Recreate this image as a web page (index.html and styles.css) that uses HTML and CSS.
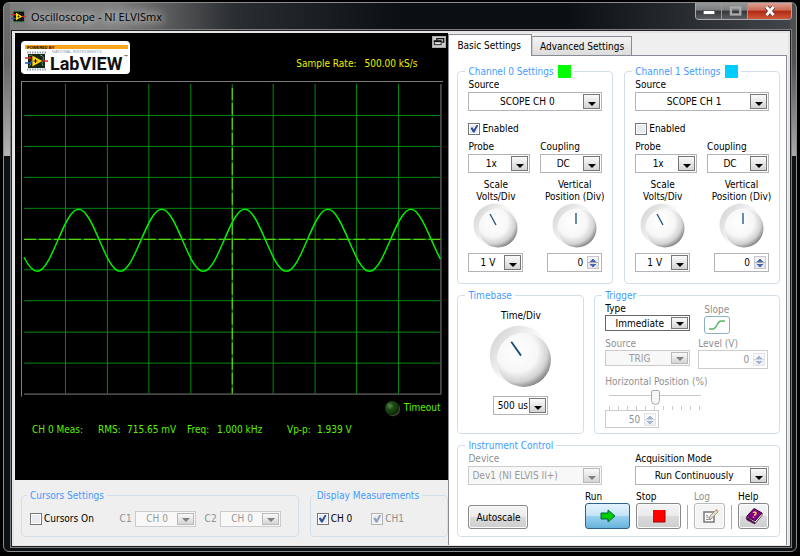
FILE: index.html
```
<!DOCTYPE html>
<html lang="en">
<head>
<meta charset="utf-8">
<title>Oscilloscope - NI ELVISmx</title>
<link rel="stylesheet" href="styles.css">
</head>
<body>
<div class="window">
	<div class="titlebar">
		<svg class="appIcon" viewBox="0 0 24 20">
			<rect x="4" y="2" width="17" height="16" fill="#111"/>
			<path d="M5 1h16M5 19h16" stroke="#3a8f4a" stroke-width="2" stroke-dasharray="1.5 1.5"/>
			<path d="M0 7h8" stroke="#e02020" stroke-width="2"/>
			<path d="M0 13h8" stroke="#2050d0" stroke-width="2"/>
			<path d="M17 10h7" stroke="#e02020" stroke-width="2"/>
			<path d="M8 4l10 6-10 6z" fill="#ffe000"/>
			<path d="M10 10h4M12 8v4" stroke="#111" stroke-width="1"/>
		</svg>
		<h1>Oscilloscope - NI ELVISmx</h1>
		<div class="windowButtons">
			<button type="button" aria-label="Minimize"><svg viewBox="0 0 12 10"><rect x="1" y="4.5" width="10" height="3.5" fill="#fff" stroke="#444" stroke-width=".7"/></svg></button>
			<button type="button" aria-label="Maximize" disabled><svg viewBox="0 0 12 10"><rect x="2.5" y="2" width="8" height="6" fill="none" stroke="#aaa" stroke-width="2"/></svg></button>
			<button type="button" aria-label="Close" class="close"><svg viewBox="0 0 12 10"><path d="M3 1.5l6 7M9 1.5l-6 7" stroke="#644" stroke-width="4"/><path d="M3 1.5l6 7M9 1.5l-6 7" stroke="#fff" stroke-width="2.4"/></svg></button>
		</div>
	</div>
	<div class="frame">
	<div class="client">
		<div class="left">
			<div class="scope">
				<div class="scopeHeader">
					<svg class="logo" viewBox="0 0 109 33">
						<rect width="109" height="33" rx="4" fill="#fff"/>
						<rect x="4" y="4" width="103" height="4" fill="#faa51a"/>
						<text x="6" y="8" class="logoTiny">POWERED BY</text>
						<rect x="7" y="13" width="17" height="14" fill="#16241a"/>
						<path d="M6 11.5h20M6 28.5h20" stroke="#9a9fb0" stroke-width="2" stroke-dasharray="1.5 1"/>
						<path d="M8 15q5-3 3 4t-3 6M19 14q5 1 3 5t0 6" stroke="#48a860" fill="none"/>
						<path d="M4 17h6" stroke="#e2231a" stroke-width="1.5"/>
						<path d="M4 22h6" stroke="#2456c8" stroke-width="1.5"/>
						<path d="M21 20h6" stroke="#e2231a" stroke-width="1.5"/>
						<path d="M11 14l11 6-11 6z" fill="#ffd814" stroke="#111" stroke-width=".7"/>
						<path d="M12.500 20h4M14.500 18v4" stroke="#111"/>
						<text x="31" y="12" class="logoMaker">NATIONAL INSTRUMENTS</text>
						<text x="29" y="29" class="logoName">LabVIEW</text>
						<text x="103" y="17" class="logoTiny">™</text>
					</svg>
					<div class="sampleRate"><span>Sample Rate:</span><span>500.00 kS/s</span></div>
					<button type="button" class="popout" aria-label="Resize graph"><svg viewBox="0 0 14 11"><path d="M4.500 4V2h8v4h-2" fill="none" stroke="#111" stroke-width="1.500"/><rect x="1.500" y="4.500" width="8" height="4.500" fill="#ddd" stroke="#111"/><path d="M1 5h9" stroke="#111" stroke-width="2"/></svg></button>
				</div>
				<svg class="graph" viewBox="21 81 423 316">
					<path class="edge" d="M21 81.500H444M21.500 81V397M24 394.500H442M441.500 84V394"/>
					<path class="grid" d="M65.500 84V394M107.500 84V394M149 84V394M191 84V394M273.500 84V394M315.500 84V394M357 84V394M399 84V394"/>
					<path class="grid" d="M24 115.500H441M24 146.500H441M24 177.500H441M24 208.500H441M24 270H441M24 301H441M24 332.500H441M24 363.500H441"/>
					<path class="axis dim" d="M232.500 84V394M24 239.500H441"/>
					<path class="axis" d="M232.500 88V394M24 239.500H441"/>
					<path class="wave" d="M24 257.500C28.400 266 32.700 271.500 37.100 271.500C52.100 271.500 63.700 209.500 78.700 209.500S105.300 271.500 120.300 271.500S146.900 209.500 161.900 209.500S188.500 271.500 203.500 271.500S230.100 209.500 245.100 209.500S271.700 271.500 286.700 271.500S313.300 209.500 328.300 209.500S354.900 271.500 369.900 271.500S396.500 209.500 411.500 209.500C421.300 209.500 431.200 241 441 259.400"/>
				</svg>
				<div class="timeout"><span class="led"></span>Timeout</div>
				<div class="measurements">
					<span>CH 0 Meas:</span>
					<span>RMS:</span><span>715.65 mV</span>
					<span>Freq:</span><span>1.000 kHz</span>
					<span>Vp-p:</span><span>1.939 V</span>
				</div>
			</div>
			<div class="footer">
				<fieldset class="cursors">
					<legend>Cursors Settings</legend>
					<div class="row">
						<label class="check"><input type="checkbox">Cursors On</label>
						<label class="off" for="c1">C1</label>
						<div class="combo"><select id="c1" disabled><option>CH 0</option></select></div>
						<label class="off" for="c2">C2</label>
						<div class="combo"><select id="c2" disabled><option>CH 0</option></select></div>
					</div>
				</fieldset>
				<fieldset class="display">
					<legend>Display Measurements</legend>
					<div class="row">
						<label class="check"><input type="checkbox" checked>CH 0</label>
						<label class="check off"><input type="checkbox" checked disabled>CH1</label>
					</div>
				</fieldset>
			</div>
		</div>
		<div class="right">
			<div class="tabs">
				<button type="button" class="active">Basic Settings</button>
				<button type="button">Advanced Settings</button>
			</div>
			<div class="panel">
				<div class="channels">
					<fieldset class="channel">
						<legend>Channel 0 Settings<span class="swatch"></span></legend>
						<label for="source0">Source</label>
						<div class="combo"><select id="source0"><option>SCOPE CH 0</option></select></div>
						<label class="check"><input type="checkbox" checked>Enabled</label>
						<div class="pair">
							<div>
								<label for="probe0">Probe</label>
								<div class="combo"><select id="probe0"><option>1x</option></select></div>
							</div>
							<div>
								<label for="coupling0">Coupling</label>
								<div class="combo"><select id="coupling0"><option>DC</option></select></div>
							</div>
						</div>
						<div class="knobs">
							<div class="knobBox">
								<label for="scale0">Scale<br>Volts/Div</label>
								<svg class="knob" viewBox="0 0 46 46"><use href="#knob"/><path d="M17 11l6 11" class="needle"/></svg>
								<div class="combo"><select id="scale0"><option>1 V</option></select></div>
							</div>
							<div class="knobBox">
								<label for="position0">Vertical<br>Position (Div)</label>
								<svg class="knob" viewBox="0 0 46 46"><use href="#knob"/><path d="M24 10v11" class="needle"/></svg>
								<div class="spin"><input type="text" id="position0" value="0"><i></i></div>
							</div>
						</div>
					</fieldset>
					<fieldset class="channel">
						<legend>Channel 1 Settings<span class="swatch blue"></span></legend>
						<label for="source1">Source</label>
						<div class="combo"><select id="source1"><option>SCOPE CH 1</option></select></div>
						<label class="check"><input type="checkbox">Enabled</label>
						<div class="pair">
							<div>
								<label for="probe1">Probe</label>
								<div class="combo"><select id="probe1"><option>1x</option></select></div>
							</div>
							<div>
								<label for="coupling1">Coupling</label>
								<div class="combo"><select id="coupling1"><option>DC</option></select></div>
							</div>
						</div>
						<div class="knobs">
							<div class="knobBox">
								<label for="scale1">Scale<br>Volts/Div</label>
								<svg class="knob" viewBox="0 0 46 46"><use href="#knob"/><path d="M17 11l6 11" class="needle"/></svg>
								<div class="combo"><select id="scale1"><option>1 V</option></select></div>
							</div>
							<div class="knobBox">
								<label for="position1">Vertical<br>Position (Div)</label>
								<svg class="knob" viewBox="0 0 46 46"><use href="#knob"/><path d="M24 10v11" class="needle"/></svg>
								<div class="spin"><input type="text" id="position1" value="0"><i></i></div>
							</div>
						</div>
					</fieldset>
				</div>
				<div class="timing">
					<fieldset class="timebase">
						<legend>Timebase</legend>
						<div class="knobBox">
							<label for="timeDiv">Time/Div</label>
							<svg class="knob big" viewBox="0 0 46 46"><use href="#knob"/><path d="M16 12l7 10" class="needle"/></svg>
							<div class="combo"><select id="timeDiv"><option>500 us</option></select></div>
						</div>
					</fieldset>
					<fieldset class="trigger">
						<legend>Trigger</legend>
						<div class="triggerGrid">
							<div>
								<label for="type">Type</label>
								<div class="combo dark"><select id="type"><option>Immediate</option></select></div>
							</div>
							<div class="slopeBox off">
								<label for="slope">Slope</label>
								<button type="button" id="slope" class="slope"><svg viewBox="0 0 24 16"><path d="M4 12h4c4 0 4-8 8-8h4" fill="none" stroke="#58b868" stroke-width="1.500"/></svg></button>
							</div>
							<div class="off">
								<label for="trigSource">Source</label>
								<div class="combo"><select id="trigSource" disabled><option>TRIG</option></select></div>
							</div>
							<div class="off">
								<label for="level">Level (V)</label>
								<div class="spin"><input type="text" id="level" value="0" disabled><i></i></div>
							</div>
						</div>
						<div class="horizontal off">
							<label for="hpos">Horizontal Position (%)</label>
							<input type="range" id="hpos" class="slider" value="50" disabled>
							<div class="ticks"></div>
							<div class="spin"><input type="text" aria-label="Horizontal Position (%)" value="50" disabled><i></i></div>
						</div>
					</fieldset>
				</div>
				<fieldset class="instrument">
					<legend>Instrument Control</legend>
					<div class="selectors">
						<div class="off">
							<label for="device">Device</label>
							<div class="combo plain"><select id="device" disabled><option>Dev1 (NI ELVIS II+)</option></select></div>
						</div>
						<div>
							<label for="mode">Acquisition Mode</label>
							<div class="combo"><select id="mode"><option>Run Continuously</option></select></div>
						</div>
					</div>
					<div class="actions">
						<button type="button" class="autoscale">Autoscale</button>
						<div class="action">
							<label for="run">Run</label>
							<button type="button" id="run" class="run"><svg viewBox="0 0 18 16"><path d="M2 5h7V2l7 6-7 6v-3H2z" fill="#0c0" stroke="#064" stroke-width="1"/></svg></button>
						</div>
						<div class="action">
							<label for="stop">Stop</label>
							<button type="button" id="stop"><svg viewBox="0 0 18 16"><rect x="3" y="2" width="12" height="12" fill="#f00"/><path d="M3 14h12V2" fill="none" stroke="#900"/></svg></button>
						</div>
						<span class="divider"></span>
						<div class="action small off">
							<label for="log">Log</label>
							<button type="button" id="log" disabled><svg viewBox="0 0 18 16"><rect x="3" y="4" width="10" height="10" fill="#fff" stroke="#777" stroke-width="1.500"/><path d="M5 7l2 1M5 9h3M5 11.500h5" stroke="#999"/><path d="M8 11l1-3 6-6 2 2-6 6z" fill="#e6dcc0" stroke="#888" stroke-width=".8"/><path d="M14 2l2-1 1.500 2-1 1z" fill="#d99"/></svg></button>
						</div>
						<span class="divider"></span>
						<div class="action small">
							<label for="help">Help</label>
							<button type="button" id="help"><svg viewBox="0 0 18 16"><path d="M2 10l8 5.500 7-8V5L10 12z" fill="#fff" stroke="#312" stroke-width=".8"/><path d="M2 8l7-7.500 8 4.500-7 8z" fill="#808" stroke="#303" stroke-width="1"/><path d="M2 8q-1.500 2 0 4l8 4v-1.500L3 10.500" fill="#606" stroke="#303" stroke-width=".6"/><path d="M8 4.500q3-1 3 .8t-2 1.700M8.500 8.500v1" fill="none" stroke="#ff3" stroke-width="1.300"/></svg></button>
						</div>
					</div>
				</fieldset>
			</div>
		</div>
	</div>
	</div>
</div>
<!-- shared knob drawing -->
<svg width="0" height="0" class="defs">
	<defs>
		<linearGradient id="rim" x1="0" y1="0.200" x2="0.800" y2="0.800">
			<stop offset="0" stop-color="#d4d4d4"/>
			<stop offset="0.550" stop-color="#f6f6f6"/>
			<stop offset="1" stop-color="#fff"/>
		</linearGradient>
		<radialGradient id="dome" cx="0.380" cy="0.350" r="0.680">
			<stop offset="0" stop-color="#fff"/>
			<stop offset="0.550" stop-color="#f7f7f7"/>
			<stop offset="0.820" stop-color="#d2d2d2"/>
			<stop offset="1" stop-color="#858585"/>
		</radialGradient>
		<g id="knob">
			<circle cx="22" cy="22" r="21.500" fill="url(#rim)"/>
			<circle cx="25" cy="25" r="19.500" fill="url(#dome)"/>
		</g>
	</defs>
</svg>
</body>
</html>
```
FILE: styles.css
```
html,body{
	padding:0;
	margin:0;
	background-color:#000;
	font-family:"DejaVu Sans Condensed","DejaVu Sans",sans-serif;
	font-size:10px;
	line-height:13px;
	color:#000;
}
*{
	box-sizing:border-box;
}
body{
	padding:2px 3px;
}
svg{
	display:block;
}
svg.defs{
	position:absolute;
}
button,input,select{
	font:inherit;
	color:inherit;
	margin:0;
	padding:0;
}
label{
	display:block;
	white-space:nowrap;
}
fieldset{
	margin:0;
	min-width:0;
	padding:0 10px;
	border:1px solid #d3dfe8;
	border-radius:4px;
}
legend{
	display:flex;
	padding:0 3px;
	height:13px;
	margin-left:-3px;
	color:#3f9cff;
	white-space:nowrap;
}
.off{
	color:#909090;
}

/* window frame */
.window{
	border:1px solid #8c8c8c;
	border-radius:6px;
	padding:0 4px 3px 6px;
	background:
		linear-gradient(to bottom,#6e6e6e 0,#666 60px,#b4b4b4 153px,transparent 153px) left/6px 100% no-repeat,
		linear-gradient(to bottom,#4a4c4e 0,#555 60px,#aaa 153px,transparent 153px) right/6px 100% no-repeat,
		linear-gradient(to right,#7c7c7c 0,#808080 110px,#2a2d31 230px,#0b0f14 400px,#0b0f14 560px,#43474b 100%) top/100% 28px no-repeat,
		#0c1116;
}
.titlebar{
	display:flex;
	height:26px;
	padding-left:1px;
	align-items:center;
}
.titlebar h1{
	flex:1;
	margin:0 0 0 5px;
	font-size:11px;
	font-weight:normal;
	font-family:"Open Sans",sans-serif;
	text-shadow:0 0 8px #ccc,0 0 8px #ccc,0 0 12px #bbb;
}
.appIcon{
	width:15px;
	height:13px;
}
.windowButtons{
	display:flex;
	align-self:flex-start;
	border:1px solid #aaa;
	border-top:none;
	border-radius:0 0 4px 4px;
	overflow:hidden;
}
.windowButtons button{
	width:26px;
	height:16px;
	border:none;
	border-right:1px solid #999;
	background:linear-gradient(#96989a 0,#7a7c7e 45%,#33363a 50%,#5c5f62 100%);
}
.windowButtons svg{
	width:14px;
	height:12px;
	margin:0 auto;
}
.windowButtons button.close{
	width:43px;
	border-right:none;
	background:linear-gradient(#dca195 0,#cf6a55 45%,#b02a12 50%,#d0583a 100%);
}
.frame{
	border:1px solid #7c7c7c;
	padding:1px;
	background-color:#222;
}
.client{
	display:grid;
	grid-template-columns:minmax(0,434fr) minmax(0,340fr);
	border:2px solid #e4e4e4;
	border-bottom-width:1px;
	padding-left:1px;
	background-color:#efefef;
}

/* scope display */
.scope{
	background-color:#000;
	color:#5cf000;
	padding:0 5px 44px 6px;
}
.scopeHeader{
	display:flex;
	align-items:flex-start;
	height:48px;
	padding-top:3px;
	margin-right:-3px;
}
.logo{
	width:109px;
	height:33px;
	margin-top:5px;
}
.logoTiny{
	font:bold 4px "Liberation Sans",sans-serif;
}
.logoMaker{
	font:4px "Liberation Sans",sans-serif;
	fill:#8a9aa4;
}
.logoName{
	font:bold 18px Roboto,"Liberation Sans",sans-serif;
	fill:#111;
}
.sampleRate{
	display:flex;
	gap:8px;
	margin:21px 15px 0 auto;
	color:#e8f000;
}
.popout{
	width:14px;
	height:12px;
	border:1px solid #aaa;
	background-color:#ccc;
}
.graph{
	width:100%;
	height:auto;
}
.graph path{
	fill:none;
	stroke-width:1px;
}
.graph .edge{
	stroke:#808080;
}
.graph .grid{
	stroke:#008a10;
}
.graph .axis{
	stroke:#70f010;
	stroke-dasharray:12 3;
}
.graph .axis.dim{
	stroke:#108a10;
	stroke-dasharray:none;
}
.graph .wave{
	stroke:#00f000;
	stroke-width:1.5px;
}
.timeout{
	display:flex;
	justify-content:flex-end;
	gap:5px;
	margin:4px 3px 0 0;
}
.led{
	width:14px;
	height:14px;
	border-radius:50%;
	background:radial-gradient(circle at 35% 35%,#5a8a50 0,#1e4a14 30%,#0c2a06 75%);
	box-shadow:1px 1px 1px #555;
}
.measurements{
	display:grid;
	grid-template-columns:66px 29px 60px 30px 70px 30px auto;
	justify-content:start;
	margin:8px 0 0 11px;
	white-space:nowrap;
}
.footer{
	display:grid;
	grid-template-columns:2fr 1fr;
	gap:11px;
	padding:9px 0 8px 6px;
}
.cursors{
	padding:0 8px;
}
.display{
	padding:0 6px;
}
.footer .row{
	display:flex;
	align-items:center;
	height:34px;
}
.cursors .check{
	flex:1;
}
.cursors .combo{
	width:61px;
	margin:0 9px 0 3px;
}
.footer .combo select{
	height:16px;
}
.display .row{
	gap:19px;
}

/* controls */
.check{
	display:flex;
	align-items:center;
	gap:2px;
}
input[type="checkbox"]{
	appearance:none;
	width:12px;
	height:12px;
	border:1px solid #777;
	background-color:#e8ecf0;
	box-shadow:inset 0 0 0 1px #fff;
}
input[type="checkbox"]:checked::before{
	content:"";
	display:block;
	width:8px;
	height:8px;
	margin:1px;
	background-color:#2c4c98;
	clip-path:polygon(0 45%,25% 35%,42% 62%,80% 0,100% 6%,50% 100%,32% 100%);
}
input[type="checkbox"]:disabled{
	opacity:0.5;
}
.combo{
	position:relative;
}
.combo select{
	display:block;
	appearance:none;
	width:100%;
	height:19px;
	padding-right:16px;
	border:1px solid #b4b4b8;
	border-radius:0;
	background-color:#fff;
	text-align-last:center;
	opacity:1;
}
.combo.dark select{
	height:16px;
	border-color:#666;
}
.combo.plain select{
	text-align-last:left;
	padding-left:3px;
}
.combo select:disabled{
	color:#999;
	border-color:#ccc;
	background-color:#f8f8f8;
}
.combo::before{
	content:"";
	position:absolute;
	top:2px;
	right:2px;
	bottom:2px;
	width:15px;
	border:1px solid #777;
	background:linear-gradient(#fafafa,#d4d4d4);
	pointer-events:none;
}
.combo::after{
	content:"";
	position:absolute;
	right:6px;
	bottom:5px;
	border:4px solid transparent;
	border-top-color:#000;
	border-bottom:none;
	pointer-events:none;
}
.combo:has(:disabled)::before{
	border-color:#b8b8b8;
}
.combo:has(:disabled)::after{
	border-top-color:#808080;
}
.spin{
	display:flex;
	align-items:center;
	width:55px;
	height:19px;
	border:1px solid #b4b4b8;
	background-color:#fff;
}
.spin input{
	flex:1;
	min-width:0;
	border:none;
	background:none;
	text-align:right;
}
.spin i{
	width:12px;
	height:13px;
	margin:0 2px 0 4px;
	border:1px solid #c8c8cc;
	background:
		conic-gradient(from 143deg at 50% 0,#4a66b8 74deg,transparent 0) 50% 1px/6px 4px no-repeat,
		conic-gradient(from -37deg at 50% 100%,#4a66b8 74deg,transparent 0) 50% 7px/6px 4px no-repeat,
		linear-gradient(#f4f4f4 45%,#aaa 45%,#aaa 55%,#e4e4e4 55%);
}
.spin:has(:disabled){
	border-color:#ccc;
}
.spin:has(:disabled) i{
	opacity:0.5;
}

/* settings tabs */
.right{
	display:flex;
	flex-direction:column;
	padding-right:1px;
}
.tabs{
	display:flex;
	align-items:flex-end;
	height:22px;
}
.tabs button{
	height:19px;
	padding:0 7px;
	border:1px solid #888c94;
	border-left-color:#ccc;
	border-bottom:none;
	background:linear-gradient(#f4f4f4,#dcdcdc);
	white-space:nowrap;
}
.tabs button.active{
	height:22px;
	padding:0 10px 0 8px;
	margin-bottom:-1px;
	border-color:#888c94;
	background:#fff;
	z-index:1;
}
.panel{
	flex:1;
	padding:9px 6px 8px 8px;
	border:1px solid #888c94;
	border-bottom:none;
	background-color:#fff;
}
.channels{
	display:grid;
	grid-template-columns:1fr 1fr;
	gap:11px;
}
.swatch{
	width:13px;
	height:13px;
	margin-left:4px;
	background-color:#0f0;
}
.swatch.blue{
	background-color:#0cf;
}
.channel{
	padding-bottom:11px;
}
.channel label[for^="source"]{
	padding:0 0 1px 0;
}
.channel .check{
	margin:11px 0 5px 0;
}
.pair{
	display:grid;
	grid-template-columns:1fr 1fr;
	gap:10px;
}
.pair label{
	padding-bottom:1px;
}
.knobs{
	display:flex;
	justify-content:space-between;
	padding-top:6px;
}
.knobBox{
	display:flex;
	flex-direction:column;
	align-items:center;
	width:55px;
	text-align:center;
	line-height:12px;
}
.knobBox .combo{
	width:55px;
}
.knob{
	width:46px;
	height:46px;
	margin-bottom:4px;
}
.knob.big{
	width:64px;
	height:64px;
	margin:3px 0 7px 0;
}
.needle{
	fill:none;
	stroke:#1c4c7c;
	stroke-width:1.300;
}
.timing{
	display:grid;
	grid-template-columns:127fr 186fr;
	gap:10px;
	margin-top:5px;
}
.timebase{
	display:flex;
	justify-content:center;
	padding-top:8px;
}
.triggerGrid{
	display:grid;
	grid-template-columns:85px 70px;
	column-gap:8px;
}
.trigger{
	padding-bottom:5px;
}
.triggerGrid .off label{
	padding-top:1px;
}
.slopeBox{
	padding-left:6px;
}
.slope{
	width:26px;
	height:18px;
	border:1px solid #8ab0c4;
	border-radius:3px;
	background-color:#fff;
}
.slope svg{
	width:24px;
	height:16px;
}
.trigger .spin,.trigger .combo{
	height:16px;
}
.triggerGrid .combo select{
	height:16px;
}
.triggerGrid .spin{
	width:70px;
	height:19px;
}
.horizontal{
	padding-top:6px;
}
.slider{
	display:block;
	appearance:none;
	width:100px;
	height:18px;
	background:linear-gradient(#c8c8c8,#c8c8c8) 50% 7px/92px 1px no-repeat;
}
.slider::-webkit-slider-thumb{
	appearance:none;
	width:9px;
	height:15px;
	border:1px solid #aaa;
	border-radius:2px 2px 5px 5px;
	background-color:#f6f6f6;
}
.ticks{
	width:92px;
	height:4px;
	margin-left:4px;
	background:repeating-linear-gradient(to right,#ccc 0,#ccc 1px,transparent 1px,transparent 9px);
}
.horizontal .spin{
	width:54px;
	height:18px;
}
.instrument{
	margin-top:5px;
	padding-bottom:7px;
}
.selectors{
	display:grid;
	grid-template-columns:1fr 1fr;
	gap:33px;
}
.selectors label{
	padding-bottom:1px;
}
.actions{
	display:flex;
	align-items:flex-end;
	padding-top:5px;
	gap:6px;
}
.actions button{
	display:block;
	width:45px;
	height:26px;
	border:1px solid #888;
	border-radius:3px;
	background:linear-gradient(#f4f4f4 0,#ebebeb 48%,#dadada 52%,#cecece 100%);
	box-shadow:inset 0 0 0 1px #fcfcfc;
}
.actions svg{
	width:18px;
	height:16px;
	margin:0 auto;
}
.actions button.autoscale{
	width:60px;
	height:24px;
	margin-right:auto;
}
.actions button.run{
	border-color:#2c628b;
	background:linear-gradient(#e4f3fc 0,#c4e5f8 48%,#98d1f0 52%,#68b3dc 100%);
	box-shadow:none;
}
.actions .small button{
	width:31px;
}
.actions button:disabled{
	border-color:#bbb;
	background:#f4f4f4;
}
.divider{
	width:1px;
	height:24px;
	background-color:#aaa;
}
```
